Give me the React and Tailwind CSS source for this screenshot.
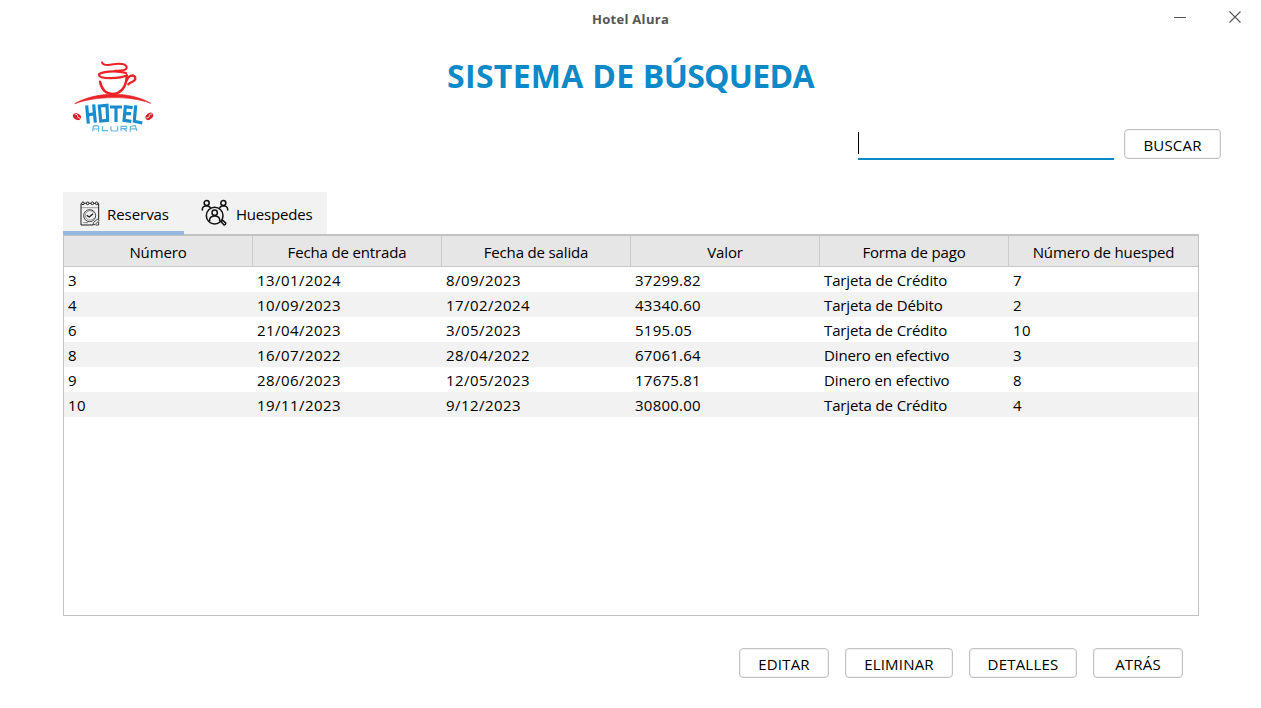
const columns = ['Número', 'Fecha de entrada', 'Fecha de salida', 'Valor', 'Forma de pago', 'Número de huesped'];

const rows = [
  ['3', '13/01/2024', '8/09/2023', '37299.82', 'Tarjeta de Crédito', '7'],
  ['4', '10/09/2023', '17/02/2024', '43340.60', 'Tarjeta de Débito', '2'],
  ['6', '21/04/2023', '3/05/2023', '5195.05', 'Tarjeta de Crédito', '10'],
  ['8', '16/07/2022', '28/04/2022', '67061.64', 'Dinero en efectivo', '3'],
  ['9', '28/06/2023', '12/05/2023', '17675.81', 'Dinero en efectivo', '8'],
  ['10', '19/11/2023', '9/12/2023', '30800.00', 'Tarjeta de Crédito', '4'],
];

const cellStyles = [
  'tracking-[0.3px]',
  'tracking-[0.44px]',
  'tracking-[0.44px]',
  'tracking-[0.24px]',
  'tracking-[-0.12px]',
  'tracking-[0.3px]',
];

function Logo() {
  return (
    <svg className="block h-[90px] w-[110px]" viewBox="0 0 330 270" fill="none">
      <g stroke="#ec2227" strokeLinecap="round" strokeLinejoin="round">
        <path d="M126 37C130 48 145 46 160 43C177 40 199 41 200 52C201 61 184 63 165 62" strokeWidth="6" />
        <path d="M198 69C170 60 116 65 117 75C118 88 180 87 201 76" strokeWidth="7" />
        <path d="M120 95C124 113 135 131 157 132C181 132 199 112 200 80" strokeWidth="7.5" />
        <path d="M201 90C207 72 226 74 226 85C226 97 211 94 205 103" strokeWidth="7" />
      </g>
      <path d="M44 161C108 124 210 123 272 160C210 136 108 138 44 161Z" fill="#ec2227" stroke="#ec2227" strokeWidth="2" />
      <g stroke="#188ccc" strokeWidth="9.5" strokeLinejoin="miter">
        <path d="M80 166L85 221M101 163L106 218M82 195L105 191" />
        <path d="M118 168L141 166L143 211L122 213Z" />
        <path d="M150 171H186M168 171V216" />
        <path d="M218 173L196 170L192 211L214 214M194 191H213" />
        <path d="M227 166L223 214L247 219" />
      </g>
      <g stroke="#63b6e1" strokeWidth="3.5" strokeLinejoin="round">
        <path d="M98 244L100 230Q101 227 105 227L116 228V245M99 237H115" />
        <path d="M127 228V242H144" />
        <path d="M153 229V239Q153 243 158 243H168Q173 243 173 239V229" />
        <path d="M183 244V229H200V236H184M193 237L201 244" />
        <path d="M211 245V231Q211 228 215 228L226 227L231 243M212 237L228 236" />
      </g>
      <g fill="#d8212a">
        <ellipse cx="51" cy="200" rx="13" ry="9" transform="rotate(30 51 200)" />
        <ellipse cx="268" cy="199" rx="13" ry="9" transform="rotate(-42 268 199)" />
      </g>
      <path d="M43 191Q55 193 53 200Q52 204 62 205M277 192Q266 192 268 199Q268 203 259 204" stroke="white" strokeWidth="2.5" />
    </svg>
  );
}

function ReservasIcon() {
  return (
    <svg className="block h-[27px] w-[20px] shrink-0" viewBox="0 0 60 81" fill="none" stroke="#1d1d1d" strokeWidth="3">
      <path d="M5 11H3V75H38M56 59V11H53" />
      <path d="M38 75L41 67L53 57L57 62L46 73ZM47 75H56V66" strokeWidth="2.5" />
      <path d="M4 23H55" strokeWidth="1.2" />
      <circle cx="9" cy="10" r="4" /><circle cx="23" cy="10" r="4" /><circle cx="37" cy="10" r="4" /><circle cx="50" cy="10" r="4" />
      <path d="M13 10H19M27 10H33M41 10H46" />
      <circle cx="29" cy="47" r="18" strokeWidth="2.5" />
      <path d="M41 38A14 14 0 1 0 42 53" strokeWidth="1.2" />
      <path d="M20 46L28 51L39 41" strokeWidth="4" />
      <path d="M10 68H24" strokeWidth="1.5" />
    </svg>
  );
}

function HuespedesIcon() {
  return (
    <svg className="block h-[28px] w-[28px] shrink-0" viewBox="0 0 84 84" fill="none" stroke="#121212" strokeWidth="4.6" strokeLinecap="round">
      <circle cx="17" cy="12" r="7.5" /><circle cx="67" cy="12" r="7.5" />
      <path d="M4 33V30Q5 21 16 20Q25 20 28 27M80 33V30Q79 21 68 20Q59 20 56 27" />
      <circle cx="41" cy="50" r="25" />
      <circle cx="41" cy="41" r="8" />
      <path d="M26 65V61Q28 51 41 51Q54 51 56 61V65" />
      <path d="M60 68L65 64L74 72Q75 77 69 78Z" />
    </svg>
  );
}

function Button({ children, className }) {
  return (
    <button className={`flex h-[30px] items-center justify-center rounded-[4px] border border-[#c2c2c2] bg-white pt-[3px] tracking-[0.2px] shadow-[inset_0_0_0_1px_#f3f3f3] ${className}`}>
      {children}
    </button>
  );
}

export default function App() {
  return (
    <div className="flex h-[708px] w-[1261px] flex-col overflow-hidden bg-white font-['Open_Sans','Noto_Sans',sans-serif] text-[15px] leading-[25px] tracking-[-0.15px] text-black">
      <header className="grid h-[38px] grid-cols-[1fr_auto_1fr] items-center">
        <div />
        <div className="text-[13px] leading-[38px] font-bold tracking-[0.3px] text-[#555]">Hotel Alura</div>
        <div className="flex items-center justify-end gap-[41px] pr-[19px] pb-[4px]">
          <svg className="h-[14px] w-[14px]" viewBox="0 0 14 14"><path d="M1 7.5H13" stroke="#505050" /></svg>
          <svg className="h-[14px] w-[14px]" viewBox="0 0 14 14"><path d="M1.5 1.5L12.5 12.5M12.5 1.5L1.5 12.5" stroke="#555" strokeWidth="1.1" /></svg>
        </div>
      </header>

      <div className="grid h-[91px] grid-cols-[1fr_auto_1fr]">
        <div className="pt-[12px] pl-[60px]"><Logo /></div>
        <h1 className="pt-[16px] text-[32px] leading-[44px] font-bold whitespace-nowrap text-[#0c8ac7]">
          <span className="tracking-[0.3px]">SISTEMA </span>
          <span className="tracking-[0.2px]">DE </span>
          <span className="tracking-[-0.7px]">BÚSQUEDA</span>
        </h1>
        <div />
      </div>

      <div className="flex h-[63px] items-start justify-end gap-[10px] pr-[40px]">
        <div className="flex h-[31px] w-[256px] items-start border-b-2 border-[#0c8ac7] pt-[3px]">
          <div className="h-[22px] w-px bg-black" />
        </div>
        <Button className="w-[97px]">BUSCAR</Button>
      </div>

      <main className="ml-[63px] w-[1136px]">
        <div className="flex h-[42px] w-[264px] bg-[#f2f2f2]">
          <div className="flex h-[43px] w-[121px] items-center gap-[7px] border-b-4 border-[#93b9de] pt-[3px] pl-[17px]">
            <ReservasIcon /><span className="pt-[2px] tracking-[-0.05px]">Reservas</span>
          </div>
          <div className="flex h-[42px] items-center gap-[7px] pl-[17px]">
            <HuespedesIcon /><span className="pt-[3px] tracking-[-0.2px]">Huespedes</span>
          </div>
        </div>
        <div className="h-[382px] border border-t-2 border-[#c2c2c2]">
          <div className="grid h-[31px] grid-cols-[189px_189px_189px_189px_189px_189px] border-b border-[#c8c8c8] bg-[#e6e6e6]">
            {columns.map((name, i) => (
              <div key={name} className={`pt-[4px] text-center whitespace-nowrap ${i < 5 ? 'border-r border-[#cbcbcb]' : ''}`}>{name}</div>
            ))}
          </div>
          {rows.map((row, i) => (
            <div key={row[0]} className={`grid h-[25px] grid-cols-[189px_189px_189px_189px_189px_189px] ${i % 2 ? 'bg-[#f2f2f2]' : 'bg-white'}`}>
              {row.map((cell, j) => <div key={j} className={`pt-px pl-[4px] whitespace-nowrap ${cellStyles[j]}`}>{cell}</div>)}
            </div>
          ))}
        </div>
      </main>

      <footer className="mt-[32px] flex justify-end gap-4 pr-[78px]">
        <Button className="w-[90px]">EDITAR</Button>
        <Button className="w-[108px]">ELIMINAR</Button>
        <Button className="w-[108px]">DETALLES</Button>
        <Button className="w-[90px]">ATRÁS</Button>
      </footer>
    </div>
  );
}
